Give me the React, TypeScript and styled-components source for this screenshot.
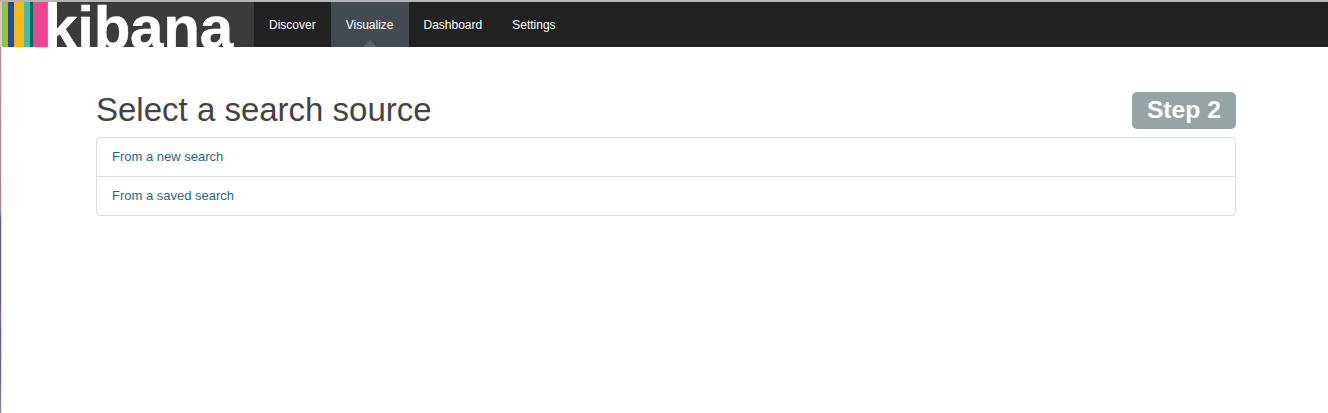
import React from "react";
import styled, { createGlobalStyle } from "styled-components";

const Global = createGlobalStyle`
  html, body { margin: 0; padding: 0; background: #fff; height: 100%; }
  body { font-family: "Liberation Sans", Arial, sans-serif; font-size: 13px; color: #444; overflow: hidden; }
`;

const Page = styled.div`
  height: 413px;
  display: flex;
  flex-direction: column;
`;

const Navbar = styled.nav`
  height: 47px;
  box-sizing: border-box;
  border-top: 2px solid #b5b5b5;
  background: #222;
  display: flex;
  flex: none;
`;

const Edge = styled.span`
  width: 2px;
  flex: none;
  background: #d0c8cc;
`;

const Logo = styled.div`
  width: 252px;
  height: 45px;
  background: #3b3b3b;
  display: flex;
  overflow: hidden;
  flex: none;
`;

const Stripe = styled.span<{ $w: number; $c: string }>`
  width: ${(p) => p.$w}px;
  background: ${(p) => p.$c};
  flex: none;
`;

const WordmarkBase = styled.span`
  width: 9px;
  flex: none;
  background: #fff;
`;

const Wordmark = styled.span`
  font-weight: 700;
  font-size: 60px;
  line-height: 45px;
  letter-spacing: -0.2px;
  color: #fff;
  padding-top: 3px;
  margin-left: -13px;
  height: 42px;
  -webkit-text-stroke: 0.5px #fff;
`;

const NavList = styled.ul`
  display: flex;
  list-style: none;
  margin: 0;
  padding: 0;
`;

const NavItem = styled.li<{ $active?: boolean }>`
  position: relative;
  padding: 1px 15px 0;
  line-height: 44px;
  font-size: 12px;
  color: #fff;
  background: ${(p) => (p.$active ? "#444a52" : "transparent")};
  ${(p) =>
    p.$active &&
    `&::after {
      content: "";
      position: absolute;
      left: 50%;
      bottom: 0;
      margin-left: -7px;
      border: 7px solid transparent;
      border-top: 0;
      border-bottom-color: #5d626a;
    }`}
`;

const Body = styled.div`
  flex: 1;
  display: flex;
`;

const Sliver = styled.span`
  width: 2px;
  flex: none;
  background:
    linear-gradient(to right, transparent 50%, rgba(255, 255, 255, 0.75) 50%),
    linear-gradient(
      to bottom,
      #b58c9c 0,
      #a58498 165px,
      #5c6082 172px,
      #5c6082 255px,
      #8a6c88 268px,
      #5c6082 285px,
      #6e6a8c 330px,
      #8c8a9c 366px
    );
`;

const Content = styled.main`
  flex: 1;
  padding: 45px 92px 0 94px;
`;

const Header = styled.div`
  display: flex;
  justify-content: space-between;
  align-items: flex-start;
  height: 45px;
`;

const Title = styled.h1`
  margin: 0;
  font-weight: 400;
  font-size: 33px;
  line-height: 36px;
  color: #444;
`;

const Step = styled.div`
  background: #95a5a6;
  color: #fff;
  font-weight: 700;
  font-size: 24.7px;
  line-height: 36px;
  padding: 0 15px 1px;
  border-radius: 5px;
`;

const List = styled.div`
  border: 1px solid #ddd;
  border-radius: 4px;
`;

const Row = styled.a`
  display: block;
  height: 38px;
  line-height: 38px;
  padding: 0 15px;
  font-size: 13px;
  color: #1f6b7a;
  & + & { border-top: 1px solid #ddd; }
`;

export default function App() {
  return (
    <Page>
      <Global />
      <Navbar>
        <Edge />
        <Logo>
          <Stripe $w={6} $c="#8cc63f" />
          <Stripe $w={6} $c="#2b4a94" />
          <Stripe $w={10} $c="#f5b919" />
          <Stripe $w={6} $c="#3ebeb0" />
          <Stripe $w={3} $c="#0a6a5c" />
          <Stripe $w={15} $c="#ee4491" />
          <WordmarkBase />
          <Wordmark>kibana</Wordmark>
        </Logo>
        <NavList>
          <NavItem>Discover</NavItem>
          <NavItem $active>Visualize</NavItem>
          <NavItem>Dashboard</NavItem>
          <NavItem>Settings</NavItem>
        </NavList>
      </Navbar>
      <Body>
        <Sliver />
        <Content>
          <Header>
            <Title>Select a search source</Title>
            <Step>Step 2</Step>
          </Header>
          <List>
            <Row>From a new search</Row>
            <Row>From a saved search</Row>
          </List>
        </Content>
      </Body>
    </Page>
  );
}
